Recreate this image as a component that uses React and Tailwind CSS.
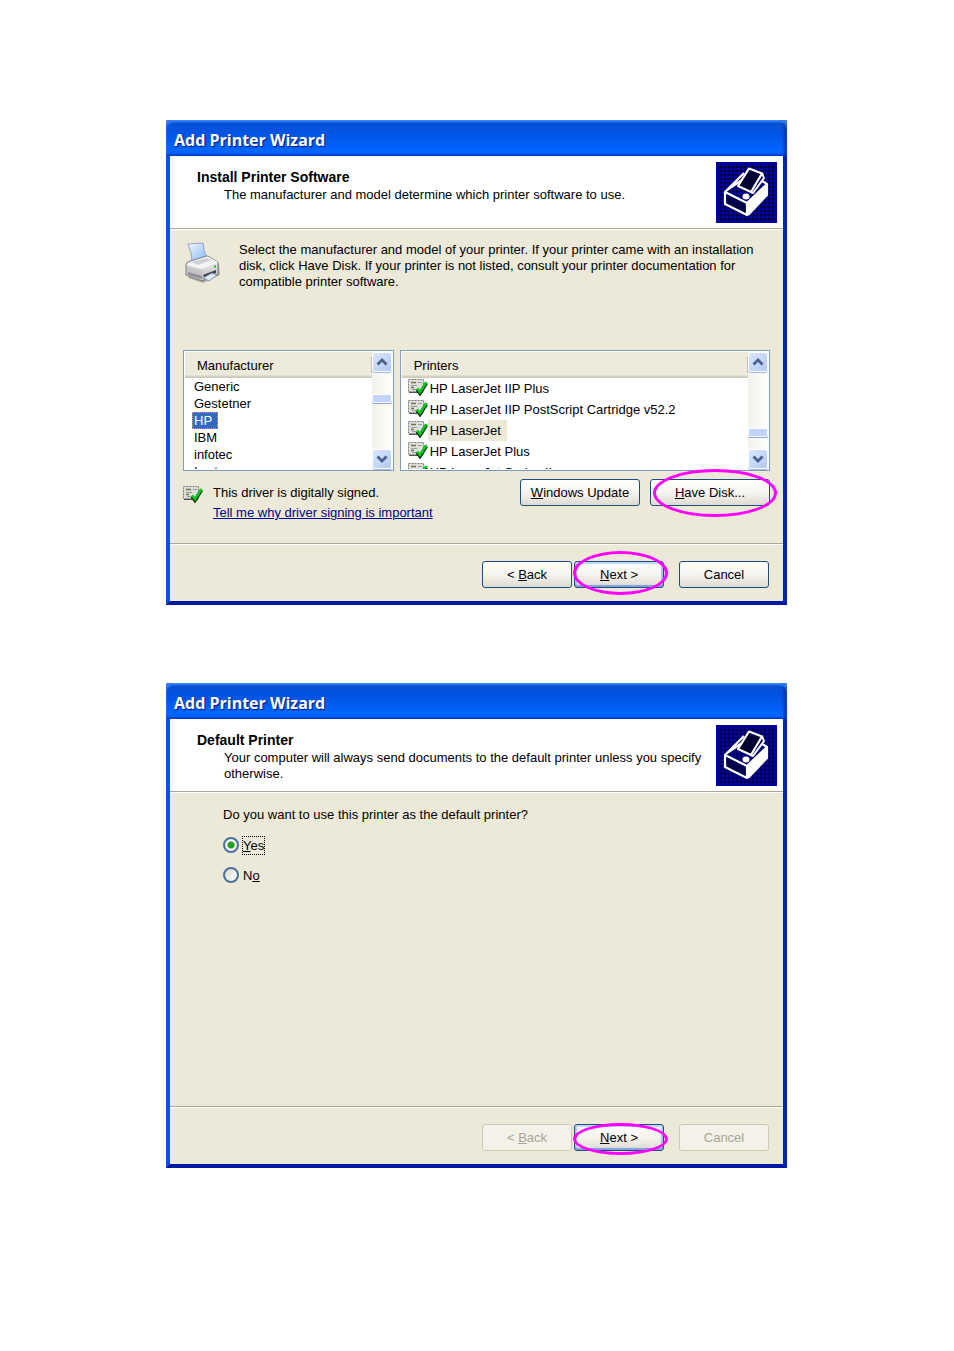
import { useId } from "react";
import clsx from "clsx";

const manufacturers = ["Generic", "Gestetner", "HP", "IBM", "infotec", "Iwatsu"];
const printers = [
  "HP LaserJet IIP Plus",
  "HP LaserJet IIP PostScript Cartridge v52.2",
  "HP LaserJet",
  "HP LaserJet Plus",
  "HP LaserJet Series II",
];

function WizardIcon() {
  const id = useId();
  return (
    <svg viewBox="0 0 61 61" className="size-[61px] shrink-0" aria-hidden="true">
      <defs>
        <pattern id={id} width="4" height="4" patternUnits="userSpaceOnUse">
          <rect width="4" height="4" fill="#00007c" />
          <rect width="2" height="2" fill="#000034" />
          <rect x="2" y="2" width="2" height="2" fill="#0000a8" />
        </pattern>
      </defs>
      <rect width="61" height="61" fill="#00009c" />
      <rect x="2" y="2" width="57" height="57" fill={`url(#${id})`} />
      <path d="M31 41 51 22V33L32 53Z" fill="#fff" />
      <path d="M9 30 31 41 32 53 9 42Z" fill="#000030" fillOpacity="0.6" />
      <g fill="none" stroke="#fff" strokeWidth="2.2" strokeLinejoin="round">
        <path d="M9 30 31 41V53L9 42Z" />
        <path d="M9 30 28 11M11 28 29 16M31 41 51 22 46 19M51 22V33L32 53" />
        <path d="M46 11 48 16 37 31 35 30" strokeWidth="2" />
        <path d="M33 6.500 46 11.500 35 30 22 24Z" fill="#000030" />
      </g>
      <ellipse cx="30" cy="34.500" rx="3.500" ry="3" fill="#fff" />
    </svg>
  );
}

function PrinterIcon() {
  const id = useId();
  return (
    <svg viewBox="0 0 40 42" className="h-[42px] w-[40px] shrink-0" aria-hidden="true">
      <defs>
        <linearGradient id={id} x1="0" y1="0" x2="1" y2="1">
          <stop offset="0" stopColor="#f4faff" />
          <stop offset="1" stopColor="#7fb1f2" />
        </linearGradient>
        <linearGradient id={`${id}b`} x1="0" y1="0" x2="0" y2="1">
          <stop offset="0" stopColor="#ffffff" />
          <stop offset="1" stopColor="#b4b4b8" />
        </linearGradient>
      </defs>
      <path d="M5 36 20 41 37 33 36 22 20 20Z" fill="#8d8b84" opacity="0.6" />
      <path d="M5 2 20 1Q20 9 25 17L9 20Q9 10 5 2Z" fill={`url(#${id})`} stroke="#8294b8" strokeWidth="0.8" />
      <path d="M3 23Q3 20 7 19L24 14Q27 14 28 16L35 20V33L19 39 3 33Z" fill={`url(#${id}b)`} stroke="#707078" strokeWidth="0.9" />
      <path d="M4 23 19 27 35 20 27 16 9 20Z" fill="#f5f5f6" />
      <path d="M8 20 24 16 29 18 15 23Z" fill="#d0d0d4" />
      <path d="M4 24 19 29V38L4 33Z" fill="#c3c3c8" />
      <path d="M5 30 19 34V37L5 33Z" fill="#8f8f96" />
      <path d="M20 33 33 28V31L22 36Z" fill="#40404a" />
      <path d="M20 36 29 31 34 33 26 39Z" fill="#dbe8fb" stroke="#7885a0" strokeWidth="0.8" />
      <rect x="31" y="23" width="2" height="3" fill="#55cc33" />
    </svg>
  );
}

function SignedIcon() {
  return (
    <svg viewBox="0 0 20 18" className="h-[18px] w-[20px] shrink-0" aria-hidden="true">
      <rect x="0.5" y="1.5" width="15" height="12" fill="#dededa" stroke="#7b7b78" strokeDasharray="2 1" />
      <path d="M1 14.500H15" stroke="#555" />
      <path d="M3 4.500h5M3 9.500h3" stroke="#77754c" strokeWidth="1.600" />
      <path d="M10 4.500h4M3 7.500h6M4 11.500h4" stroke="#9c9ca0" />
      <path d="m9 11.500 3 4L18.500 5" fill="none" stroke="#073b07" strokeWidth="3.400" />
      <path d="m9 10.500 3 3.500L18.500 4" fill="none" stroke="#06c81c" strokeWidth="2.400" />
    </svg>
  );
}

function Ring({ className }) {
  return (
    <span
      aria-hidden="true"
      className={clsx("pointer-events-none absolute z-10 rounded-[50%] border-3 border-[#ff00ff]", className)}
    />
  );
}

function XpButton({ children, width, primary, disabled }) {
  return (
    <button
      type="button"
      disabled={disabled}
      className={clsx(
        "h-[27px] rounded-[3px] border text-center leading-[24px]",
        width,
        disabled
          ? "border-[#cdcabb] bg-[#f4f2e8] text-[#a7a592]"
          : "border-[#1c4f80] bg-linear-to-b from-white via-[#f5f4ef] to-[#dedbd0] text-black",
        primary ? "shadow-[inset_0_2px_1px_#bcd4f6,inset_0_-2px_1px_#7f9fe0,inset_2px_0_1px_#a9c4f0,inset_-2px_0_1px_#a9c4f0]" : ""
      )}
    >
      {children}
    </button>
  );
}

function Footer({ busy, ring }) {
  return (
    <footer className="flex justify-end border-t border-[#aca899] pt-[17px] pr-3.5 pb-[13px] shadow-[inset_0_1px_0_#fff]">
      <XpButton width="w-[90px]" disabled={busy}>
        &lt; <u>B</u>ack
      </XpButton>
      <span className="relative mr-[15px] ml-0.5 flex">
        <XpButton width="w-[90px]" primary>
          <u>N</u>ext &gt;
        </XpButton>
        <Ring className={ring} />
      </span>
      <XpButton width="w-[90px]" disabled={busy}>
        Cancel
      </XpButton>
    </footer>
  );
}

function Wizard({ heading, description, busy, ring, children }) {
  return (
    <section className="flex min-h-[485px] w-full max-w-[621px] flex-col bg-[#4a7be8] text-[13px]">
      <header className="h-[36px] rounded-t-[7px] bg-linear-to-b from-[#0a4fd0] via-[#0054e6] via-40% to-[#0066ff] to-85% px-2 shadow-[inset_0_2px_2px_#3a8bff,inset_-3px_0_3px_#0030b8,inset_0_-2px_1px_#0048d0]">
        <h1 className="font-['Open_Sans',sans-serif] text-[16px] leading-[40px] font-bold text-white [text-shadow:1px_1px_1px_#0a1883]">
          Add Printer Wizard
        </h1>
      </header>
      <div className="flex grow flex-col border-x-4 border-b-4 border-r-[#0024b4] border-b-[#0019a0] border-l-[#0a50ea] bg-[#ece9d8]">
        <div className="flex min-h-[73px] justify-between border-b border-[#aca899] bg-white pr-1.5 pl-[27px] shadow-[0_1px_0_#fff]">
          <div className="pt-[11px]">
            <h2 className="text-[14px] leading-[20px] font-bold">{heading}</h2>
            <p className="pl-[27px] leading-[16px]">{description}</p>
          </div>
          <div className="pt-1.5">
            <WizardIcon />
          </div>
        </div>
        <div className="grow">{children}</div>
        <Footer busy={busy} ring={ring} />
      </div>
    </section>
  );
}

function ScrollButton({ label, up }) {
  return (
    <button
      type="button"
      aria-label={label}
      className="flex h-[20px] w-full items-center justify-center rounded-[3px] border border-white bg-linear-to-br from-[#dbe6fe] to-[#b2c8f7] shadow-[0_1px_0_#9db5e8]"
    >
      <svg viewBox="0 0 12 8" className="h-2 w-3" aria-hidden="true">
        <path d={up ? "M1.500 6.500 6 2l4.500 4.500" : "M1.500 1.500 6 6l4.500-4.500"} fill="none" stroke="#4d6185" strokeWidth="2.800" />
      </svg>
    </button>
  );
}

function ListPanel({ title, thumb, children }) {
  return (
    <div className="flex h-[121px] border border-[#7f9db9] bg-white p-px">
      <div className="flex min-w-0 grow flex-col overflow-hidden">
        <div className="flex shrink-0 bg-[#ebeadb] pt-[5px] pb-1 pl-3 shadow-[inset_0_-1px_0_#cbc7b8,inset_0_-2px_0_#d6d2c2,inset_0_-3px_0_#e2decd]">
          <span className="grow leading-[17px]">{title}</span>
          <span className="h-[16px] border-r border-[#c7c5b2]" />
        </div>
        <ul role="listbox" aria-label={title} className="min-h-0 grow overflow-hidden">
          {children}
        </ul>
      </div>
      <div className="flex w-[20px] shrink-0 flex-col bg-linear-to-r from-[#f3f1ec] to-[#fefefb]">
        <ScrollButton label={`Scroll ${title} up`} up />
        <div className={clsx("flex grow flex-col", thumb)}>
          <span className="h-[9px] rounded-[2px] border border-white bg-[#c2d3fc] shadow-[0_1px_0_#8ba7e4]" />
        </div>
        <ScrollButton label={`Scroll ${title} down`} />
      </div>
    </div>
  );
}

function InstallBody() {
  return (
    <div className="px-[13px] pt-[13px]">
      <div className="flex min-h-[108px] gap-4">
        <PrinterIcon />
        <p className="leading-[16px]">
          Select the manufacturer and model of your printer. If your printer came with an installation disk, click Have
          Disk. If your printer is not listed, consult your printer documentation for compatible printer software.
        </p>
      </div>
      <div className="grid grid-cols-[211fr_371fr] gap-1.5">
        <ListPanel title="Manufacturer" thumb="justify-start pt-[22px]">
          {manufacturers.map((name) => (
            <li key={name} role="option" aria-selected={name === "HP"} className="pl-[7px] leading-[17px]">
              <span
                className={clsx(
                  "inline-block px-0.5",
                  name === "HP" && "bg-[#316ac5] pr-1.5 text-white outline-1 -outline-offset-1 outline-dotted outline-[#e0a050]"
                )}
              >
                {name}
              </span>
            </li>
          ))}
        </ListPanel>
        <ListPanel title="Printers" thumb="justify-end pb-3">
          {printers.map((name) => (
            <li key={name} role="option" aria-selected={name === "HP LaserJet"} className="flex h-[21px] pl-1.5">
              <SignedIcon />
              <span className={clsx("pr-1.5 pl-0.5 leading-[21px]", name === "HP LaserJet" && "bg-[#ece9d8]")}>{name}</span>
            </li>
          ))}
        </ListPanel>
      </div>
      <div className="flex pt-2">
        <div className="pt-1.5">
          <SignedIcon />
        </div>
        <div className="grow pt-1 pl-2.5 leading-[20px]">
          <p>This driver is digitally signed.</p>
          <a href="#signing" className="text-[#00008b] underline">
            Tell me why driver signing is important
          </a>
        </div>
        <XpButton width="w-[120px]">
          <u>W</u>indows Update
        </XpButton>
        <span className="relative ml-2.5 flex self-start">
          <XpButton width="w-[120px]">
            <u>H</u>ave Disk...
          </XpButton>
          <Ring className="-top-2.5 left-[3px] h-[48px] w-[124px]" />
        </span>
      </div>
    </div>
  );
}

function Radio({ id, checked, children }) {
  return (
    <div className="flex h-[30px] items-center gap-1">
      <input
        type="radio"
        name="default-printer"
        id={id}
        defaultChecked={checked}
        className="size-4 appearance-none rounded-full border-2 border-[#4a7299] bg-linear-to-br from-[#dcdcd4] to-white checked:bg-[radial-gradient(circle,#21a121_0_3px,#f4f4f0_4px)]"
      />
      <label htmlFor={id} className={clsx("leading-[17px]", checked && "outline-1 outline-dotted outline-black")}>
        {children}
      </label>
    </div>
  );
}

function DefaultBody() {
  return (
    <fieldset className="px-[53px] pt-3.5">
      <legend className="float-left w-full pb-1.5 leading-[18px]">Do you want to use this printer as the default printer?</legend>
      <div className="clear-both">
        <Radio id="default-yes" checked>
          <u>Y</u>es
        </Radio>
        <Radio id="default-no">
          N<u>o</u>
        </Radio>
      </div>
    </fieldset>
  );
}

export default function App() {
  return (
    <main className="flex min-h-screen flex-col items-center gap-[78px] bg-white pt-[120px] pr-px pb-12 font-['Liberation_Sans',Arial,sans-serif] text-black">
      <Wizard
        heading="Install Printer Software"
        description="The manufacturer and model determine which printer software to use."
        ring="-top-2.5 -left-px h-[44px] w-[95px]"
      >
        <InstallBody />
      </Wizard>
      <Wizard
        heading="Default Printer"
        description="Your computer will always send documents to the default printer unless you specify otherwise."
        ring="-top-px -left-px h-[32px] w-[95px]"
        busy
      >
        <DefaultBody />
      </Wizard>
    </main>
  );
}
